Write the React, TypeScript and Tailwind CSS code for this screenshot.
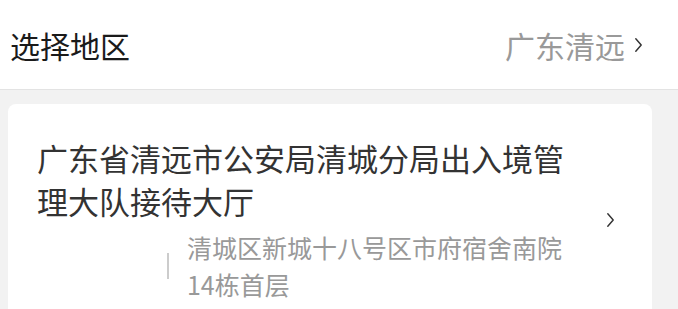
import React from "react";

const font = { fontFamily: '"Noto Sans CJK SC", "Noto Sans", sans-serif' };

function Chevron({ className }: { className?: string }) {
  return (
    <svg className={className} viewBox="0 0 12 20" fill="none" stroke="currentColor" strokeWidth="1.6" strokeLinecap="round" strokeLinejoin="round">
      <path d="M3 3 L9 10 L3 17" />
    </svg>
  );
}

export default function App() {
  return (
    <div className="w-[678px] h-[309px] overflow-hidden bg-[#f2f2f2] font-['Noto_Sans_CJK_SC',sans-serif]" style={font}>
      <div className="h-[90px] bg-white border-b border-[#e3e3e3] flex items-center justify-between pl-[10px] pr-[34px]">
        <span className="text-[30px] leading-none text-[#1a1a1a]">选择地区</span>
        <div className="flex items-center gap-[8px] text-[#999999]">
          <span className="text-[30px] leading-none">广东清远</span>
          <Chevron className="w-[11px] h-[18px] text-[#333333]" />
        </div>
      </div>
      <div className="mt-[14px] mx-[8px] w-[644px] bg-white rounded-[8px] flex pl-[29px] pr-[36px] pt-[32px] pb-[32px]">
        <div className="w-[540px] flex flex-col">
          <div className="text-[31px] leading-[43px] text-[#333333]">广东省清远市公安局清城分局出入境管理大队接待大厅</div>
          <div className="flex items-center mt-[7px] pl-[130px]">
            <div className="w-[2px] h-[26px] bg-[#cccccc] mr-[18px]" />
            <div className="w-[392px] text-[25px] leading-[37px] text-[#999999]">清城区新城十八号区市府宿舍南院14栋首层</div>
          </div>
        </div>
        <div className="flex-1 flex items-center justify-end">
          <Chevron className="w-[11px] h-[18px] text-[#333333]" />
        </div>
      </div>
    </div>
  );
}
